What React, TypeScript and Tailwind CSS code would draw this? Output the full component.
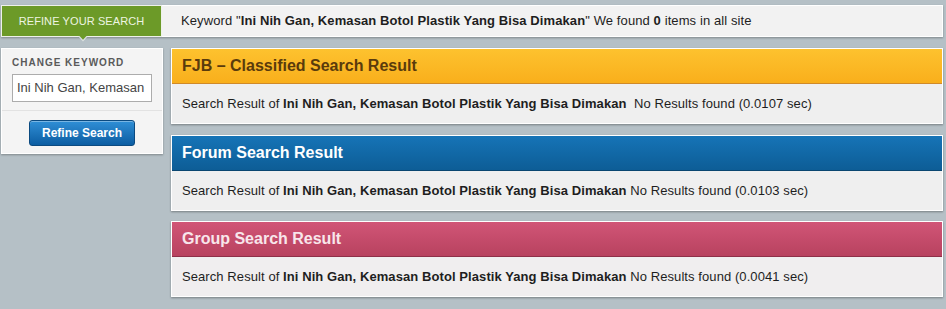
import React from "react";

const KW = "Ini Nih Gan, Kemasan Botol Plastik Yang Bisa Dimakan";

function Section({
  title,
  headerCls,
  titleCls,
  bodyCls,
  time,
  extraGap,
}: {
  title: string;
  headerCls: string;
  titleCls: string;
  bodyCls: string;
  time: string;
  extraGap?: boolean;
}) {
  return (
    <div className="border border-white shadow-[0_1px_2px_rgba(0,0,0,0.35)]">
      <div className={`h-[35px] flex items-center pl-[10px] border-b ${headerCls}`}>
        <span className={`text-[16px] font-bold leading-none ${titleCls}`}>{title}</span>
      </div>
      <div className={`h-[39px] flex items-center pl-[10px] text-[13px] tracking-[0.08px] text-[#1e1e1e] ${bodyCls}`}>
        <span>
          Search Result of <b>{KW}</b>
          {extraGap ? "\u00a0 " : " "}No Results found ({time} sec)
        </span>
      </div>
    </div>
  );
}

export default function App() {
  return (
    <div
      className="w-[946px] h-[309px] bg-[#b5c0c6] pt-[5px] overflow-hidden"
      style={{ fontFamily: '"Liberation Sans", Arial, sans-serif' }}
    >
      {/* top bar */}
      <div className="flex h-[32px] ml-[1px] mr-[3px] shadow-[0_1px_2px_rgba(0,0,0,0.3)]">
        <div className="relative w-[161px] bg-[#6c9a28] border border-[#eef2ea] flex items-center justify-center">
          <span className="text-[11px] text-[#eef5e2] tracking-[0.1px]">REFINE YOUR SEARCH</span>
          <svg
            className="absolute left-[76px] top-[30px]"
            width="10"
            height="6"
            viewBox="0 0 10 6"
          >
            <polygon points="0,0 10,0 5,5.5" fill="#dfe5e3" />
            <polygon points="1.5,0 8.5,0 5,3.8" fill="#6c9a28" />
          </svg>
        </div>
        <div className="flex-1 bg-[#f2f2f2] border border-white border-l-0 flex items-center pl-[19px] text-[13px] tracking-[0.1px] text-[#1e1e1e]">
          <span>
            Keyword "<b>{KW}</b>" We found <b>0</b> items in all site
          </span>
        </div>
      </div>

      {/* main */}
      <div className="flex mt-[11px] ml-[1px] mr-[3px] gap-[8px] items-start">
        <div className="w-[162px] h-[106px] bg-[#f4f4f4] border border-white shadow-[0_1px_2px_rgba(0,0,0,0.3)] flex flex-col">
          <div className="px-[10px] pt-[8px] pb-[8px] border-b border-[#e2e2e2]">
            <div className="text-[10px] font-bold tracking-[1px] text-[#5a5a5a] leading-[12px]">
              CHANGE KEYWORD
            </div>
            <div className="mt-[5px] h-[28px] w-[140px] border border-[#acacac] bg-white flex items-center px-[4px] text-[13px] text-[#444] overflow-hidden whitespace-nowrap">
              Ini Nih Gan, Kemasan
            </div>
          </div>
          <div className="flex justify-center pt-[9px]">
            <div className="w-[106px] h-[26px] rounded-[3px] border border-[#0b4a80] bg-gradient-to-b from-[#2f8fd6] to-[#0b5da2] flex items-center justify-center text-[12px] font-bold text-white shadow-[inset_0_1px_0_rgba(255,255,255,0.35)]">
              Refine Search
            </div>
          </div>
        </div>

        <div className="flex-1 flex flex-col">
          <Section
            title="FJB – Classified Search Result"
            headerCls="bg-gradient-to-b from-[#fdc22e] to-[#f9af1b] border-[#d08a28]"
            titleCls="text-[#5a3b0c]"
            bodyCls="bg-[#efefef]"
            time="0.0107"
            extraGap
          />
          <div className="h-[11px]" />
          <Section
            title="Forum Search Result"
            headerCls="bg-gradient-to-b from-[#1674b7] to-[#0d5d96] border-[#0a4670]"
            titleCls="text-white"
            bodyCls="bg-[#efefef]"
            time="0.0103"
          />
          <div className="h-[10px]" />
          <Section
            title="Group Search Result"
            headerCls="bg-gradient-to-b from-[#d15577] to-[#b8425f] border-[#8e2f48]"
            titleCls="text-[#f8e6eb]"
            bodyCls="bg-[#f0eeef]"
            time="0.0041"
          />
        </div>
      </div>
    </div>
  );
}
